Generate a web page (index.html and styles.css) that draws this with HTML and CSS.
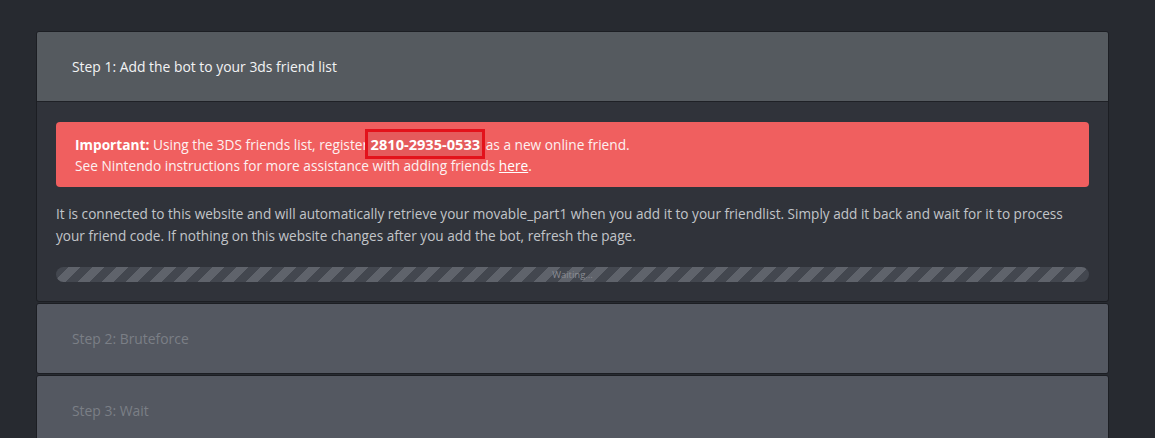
FILE: index.html
```html
<!DOCTYPE html>
<html lang="en">
<head>
  <meta charset="UTF-8">
  <title>Seedminer</title>
  <link rel="stylesheet" href="styles.css">
</head>
<body>

  <div class="steps">
    <div class="card">
      <div class="card-header">Step 1: Add the bot to your 3ds friend list</div>
      <div class="card-body">
        <div class="alert">
          <b>Important:</b> Using the 3DS friends list, register <span class="fc">2810-2935-0533</span> as a new online friend.<br>
          See Nintendo instructions for more assistance with adding friends <a href="#">here</a>.
        </div>
        <p class="info">It is connected to this website and will automatically retrieve your movable_part1 when you add it to your friendlist. Simply add it back and wait for it to process your friend code. If nothing on this website changes after you add the bot, refresh the page.</p>
        <div class="progress">
          <span>Waiting...</span>
        </div>
      </div>
    </div>

    <div class="card disabled">
      <div class="card-header">Step 2: Bruteforce</div>
    </div>

    <div class="card disabled">
      <div class="card-header">Step 3: Wait</div>
    </div>
  </div>

</body>
</html>
```

FILE: styles.css
```css
body {
  font-family: "Open Sans", "Noto Sans", sans-serif;
  background-color: #272a30;
  color: #c9cbce;
  margin: 0;
  padding: 31px 46px 0 36px;
  font-size: 13.6px;
}

.steps {
  display: flex;
  flex-direction: column;
  gap: 1px;
}

.card {
  border: 1px solid #1c1e23;
  border-radius: 3px;
  background-color: #30333a;
  overflow: hidden;
}

.card-header {
  height: 69px;
  display: flex;
  align-items: center;
  padding: 0 35px;
  background-color: #555a5f;
  color: #f2f3f4;
  font-size: 13.9px;
  border-bottom: 1px solid #1f2126;
}

.card.disabled .card-header {
  background-color: #545861;
  color: #7b7f86;
  border-bottom: none;
}

.card-body {
  padding: 20px 19px 19px 19px;
}

.alert {
  background-color: #f05f5f;
  color: #fdf1f1;
  border-radius: 4px;
  padding: 12px 19px 11px;
  line-height: 21px;
  font-size: 13.7px;
}

.alert b {
  color: #ffffff;
}

.alert a {
  color: #ffffff;
  text-decoration: underline;
}

.fc {
  font-weight: bold;
  font-size: 14.6px;
  color: #ffffff;
  outline: 3px solid #e3121b;
  margin-left: -4px;
  padding: 2px 2px 2px 3px;
  background-color: #e55a5c;
}

.info {
  margin: 16px 0 20px;
  line-height: 22px;
  color: #c2c5c9;
}

.progress {
  height: 15px;
  border-radius: 8px;
  background-color: #43474f;
  background-image: linear-gradient(-45deg, #5f636b 25%, transparent 25%, transparent 50%, #5f636b 50%, #5f636b 75%, transparent 75%, transparent);
  background-size: 24px 24px;
  display: flex;
  align-items: center;
  justify-content: center;
}

.progress span {
  font-size: 9.5px;
  color: #8a8d93;
}
```
